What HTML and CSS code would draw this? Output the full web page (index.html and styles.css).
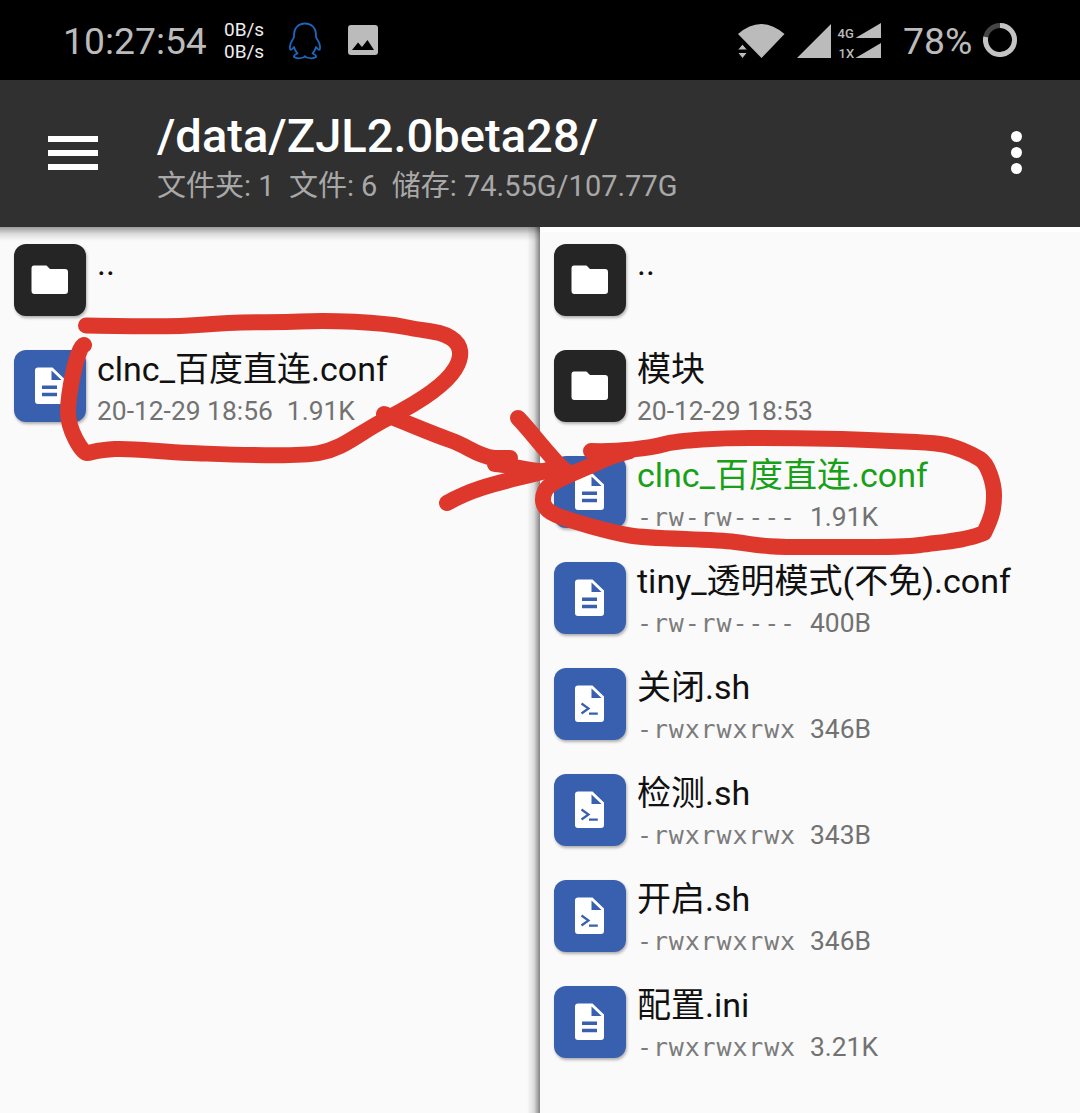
FILE: index.html
```html
<!DOCTYPE html>
<html lang="zh-CN">
<head>
<meta charset="utf-8">
<title>/data/ZJL2.0beta28/</title>
<link rel="stylesheet" href="styles.css">
</head>
<body>
<svg class="defs" width="0" height="0">
  <symbol id="folder" viewBox="0 0 72 72"><path fill="#fff" d="M20 21.500H32.500L36 25H51Q54 25 54 28V47Q54 50 51 50H20.500Q17.500 50 17.500 47V24.500Q17.500 21.500 20 21.500Z"/></symbol>
  <symbol id="page" viewBox="0 0 72 72"><path fill="#fff" fill-rule="evenodd" d="M24 17.500H38.500L50 28.500V51Q50 54 47 54H24Q21 54 21 51V20.500Q21 17.500 24 17.500ZM37.500 20.500V30H47.500Z"/></symbol>
  <symbol id="doc" viewBox="0 0 72 72"><use href="#page"/><path fill="#3860ae" d="M28 35.500h15v3.500H28zM28 42.800h15v3.500H28z"/></symbol>
  <symbol id="script" viewBox="0 0 72 72"><use href="#page"/><path fill="none" stroke="#3860ae" stroke-width="2.200" d="M27.500 35.500L34.500 40.500L27.500 45.500M35 45.700H43.800"/></symbol>
</svg>

<div class="status">
  <span class="clock">10:27:54</span>
  <span class="speed"><span>0B/s</span><span>0B/s</span></span>
  <svg class="qq" width="34" height="38" viewBox="0 0 34 38"><path fill="none" stroke="#1c66bd" stroke-width="1.800" stroke-linejoin="round" d="M17 1.500C10 1.500 6 6.500 6 12.500Q6.500 15 5 17C2.500 20.500 1.500 25 2.300 27.500Q3.500 28.500 6 25Q7 29 9.500 31.500Q5.500 33 6 35Q9 37.300 15.500 35.500L17 34.300L18.500 35.500Q25 37.300 28 35Q28.500 33 24.500 31.500Q27 29 28 25Q30.500 28.500 31.700 27.500C32.500 25 31.500 20.500 29 17Q27.500 15 28 12.500C28 6.500 24 1.500 17 1.500Z"/></svg>
  <svg class="photo" width="30" height="30" viewBox="0 0 30 30"><rect width="30" height="30" rx="3" fill="#bbb"/><path d="M4 25L10 17.500L14 22L19.500 15L26 25Z"/></svg>
  <svg class="signals" width="146" height="38" viewBox="0 0 146 38" fill="#bbb">
    <path d="M1 12Q24 -8 47.500 12L24.500 36ZM60 36L94 2V36ZM118.500 16L144 1V16ZM118.500 36L144 21V36Z"/>
    <path stroke="#000" stroke-width="1" d="M0.500 28L5.500 22L10.500 28ZM0.500 30.500H10.500L5.500 36.500Z"/>
    <text x="100.500" y="15.500">4G</text><text x="101.500" y="35.500">1X</text>
  </svg>
  <span class="percent">78%</span>
  <svg class="battery" width="34" height="34" viewBox="0 0 34 34" fill="none" stroke-width="5"><circle cx="17" cy="17" r="14.500" stroke="#444"/><path stroke="#c4c4c4" d="M17 2.500A14.500 14.500 0 1 1 2.800 14"/></svg>
</div>

<header class="toolbar">
  <div class="menu"><i></i><i></i><i></i></div>
  <div class="heading">
    <h1>/data/ZJL2.0beta28/</h1>
    <p>文件夹: 1&nbsp; 文件: 6&nbsp; 储存: 74.55G/107.77G</p>
  </div>
  <div class="more"><i></i><i></i><i></i></div>
</header>

<main class="panes">
  <section class="pane left">
    <div class="row"><svg class="icon dark"><use href="#folder"/></svg><div class="info"><div class="name">..</div></div></div>
    <div class="row"><svg class="icon"><use href="#doc"/></svg><div class="info"><div class="name">clnc_百度直连.conf</div><div class="meta"><span>20-12-29 18:56</span><span>1.91K</span></div></div></div>
  </section>
  <section class="pane right">
    <div class="row"><svg class="icon dark"><use href="#folder"/></svg><div class="info"><div class="name">..</div></div></div>
    <div class="row"><svg class="icon dark"><use href="#folder"/></svg><div class="info"><div class="name">模块</div><div class="meta"><span>20-12-29 18:53</span></div></div></div>
    <div class="row"><svg class="icon"><use href="#doc"/></svg><div class="info"><div class="name green">clnc_百度直连.conf</div><div class="meta"><span class="mode">-rw-rw----</span><span>1.91K</span></div></div></div>
    <div class="row"><svg class="icon"><use href="#doc"/></svg><div class="info"><div class="name">tiny_透明模式(不免).conf</div><div class="meta"><span class="mode">-rw-rw----</span><span>400B</span></div></div></div>
    <div class="row"><svg class="icon"><use href="#script"/></svg><div class="info"><div class="name">关闭.sh</div><div class="meta"><span class="mode">-rwxrwxrwx</span><span>346B</span></div></div></div>
    <div class="row"><svg class="icon"><use href="#script"/></svg><div class="info"><div class="name">检测.sh</div><div class="meta"><span class="mode">-rwxrwxrwx</span><span>343B</span></div></div></div>
    <div class="row"><svg class="icon"><use href="#script"/></svg><div class="info"><div class="name">开启.sh</div><div class="meta"><span class="mode">-rwxrwxrwx</span><span>346B</span></div></div></div>
    <div class="row"><svg class="icon"><use href="#doc"/></svg><div class="info"><div class="name">配置.ini</div><div class="meta"><span class="mode">-rwxrwxrwx</span><span>3.21K</span></div></div></div>
  </section>
</main>

<svg class="marks" width="1080" height="1113" viewBox="0 0 1080 1113">
  <path d="M86 325.500C130 326 165 328 205 324.500S270 323 300 321.500S380 322 405 327S440 331 451 338S463 356 455 369S425 399 390 417S345 448 319 453S220 454 190 453S135 448 115 449S92 453 87 453S68 430 68 412S77 347 84 345"/>
  <path d="M384 414C410 424 430 433 450 440S475 455 494 458H510L495 464C515 465 535 475 565 470"/>
  <path d="M518 418C530 430 545 451 562 468"/>
  <path d="M447 503C480 484 515 480 548 470"/>
  <path d="M591 451C620 452 650 448 665 444S720 438 750 438S850 439 880 440.500S925 442 940 444S972 454 980 459S994 483 994 495S993 515 984 533C965 541 940 542 920 545S860 547 810 547S760 545 735 542S650 539 630 535.500S570 521 556 515S541 500 545 491S570 475 590 466S605 458 630 451"/>
</svg>
</body>
</html>
```
FILE: styles.css
```css
* { box-sizing: border-box; }
body {
  margin: 0;
  width: 1080px;
  height: 1113px;
  overflow: hidden;
  position: relative;
  display: flex;
  flex-direction: column;
  background: #fafafa;
  font-family: Roboto, "Noto Sans CJK SC", sans-serif;
}
.defs { position: absolute; }
.status {
  height: 80px;
  flex: none;
  display: flex;
  align-items: center;
  background: #000;
  color: #bbb;
  padding-left: 63px;
}
.clock { width: 161px; font-size: 37.300px; line-height: 44px; padding-top: 1px; }
.speed {
  width: 64px;
  display: flex;
  flex-direction: column;
  padding-top: 2px;
  color: #eee;
  font-size: 19px;
  line-height: 22px;
}
.qq { margin-top: 1px; }
.photo { margin-left: 26px; }
.signals { margin-left: 359px; margin-top: 2px; overflow: visible; }
.signals text { font: 500 13px Roboto, sans-serif; }
.percent { margin-left: 20px; width: 80px; font-size: 37.300px; line-height: 44px; padding-top: 1px; }
.battery { flex: none; }

.toolbar {
  height: 147px;
  flex: none;
  display: flex;
  background: #303030;
  padding: 0 58px 0 48px;
}
.menu {
  width: 109px;
  padding-top: 56px;
  display: flex;
  flex-direction: column;
  gap: 8px;
}
.menu i { width: 50px; height: 6px; background: #fff; }
.heading { flex: 1; padding-top: 28px; }
h1 {
  margin: 0;
  color: #fff;
  font-size: 47.100px;
  font-weight: 500;
  line-height: 56px;
  white-space: nowrap;
}
p {
  margin: 0;
  color: #a8a8a8;
  font-size: 29px;
  line-height: 44px;
  white-space: nowrap;
}
.more {
  padding-top: 51px;
  display: flex;
  flex-direction: column;
  gap: 5px;
}
.more i { width: 11px; height: 11px; border-radius: 50%; background: #fff; }

.panes { flex: 1; display: flex; }
.pane { width: 540px; }
.left {
  background:
    linear-gradient(to left, rgba(0,0,0,.48), rgba(0,0,0,.12) 6px, transparent 13px),
    linear-gradient(rgba(0,0,0,.38), rgba(0,0,0,.12) 7px, transparent 14px),
    #fafafa;
}
.right { background: linear-gradient(#fff 5px, #fafafa 5px); }
.row { height: 106px; display: flex; padding: 17px 0 0 14px; }
.icon {
  flex: none;
  width: 72px;
  height: 72px;
  border-radius: 12px;
  background: #3860ae;
  box-shadow: 1px 2px 3px rgba(0,0,0,.3);
}
.icon.dark { background: #252525; }
.info { padding-left: 11px; white-space: nowrap; }
.name { font-size: 34px; line-height: 38px; color: #111; }
.green { color: #18a018; }
.meta {
  display: flex;
  gap: 14px;
  font-size: 26.400px;
  line-height: 40px;
  margin-top: 3px;
  color: #727272;
}
.mode {
  width: 159px;
  padding-top: 1px;
  font-family: "DejaVu Sans Mono", monospace;
  font-size: 25px;
  letter-spacing: .850px;
  color: #7c7c7c;
}
.marks {
  position: absolute;
  left: 0;
  top: 0;
  fill: none;
  stroke: #de382c;
  stroke-width: 16;
  stroke-linecap: round;
  stroke-linejoin: round;
}
```
